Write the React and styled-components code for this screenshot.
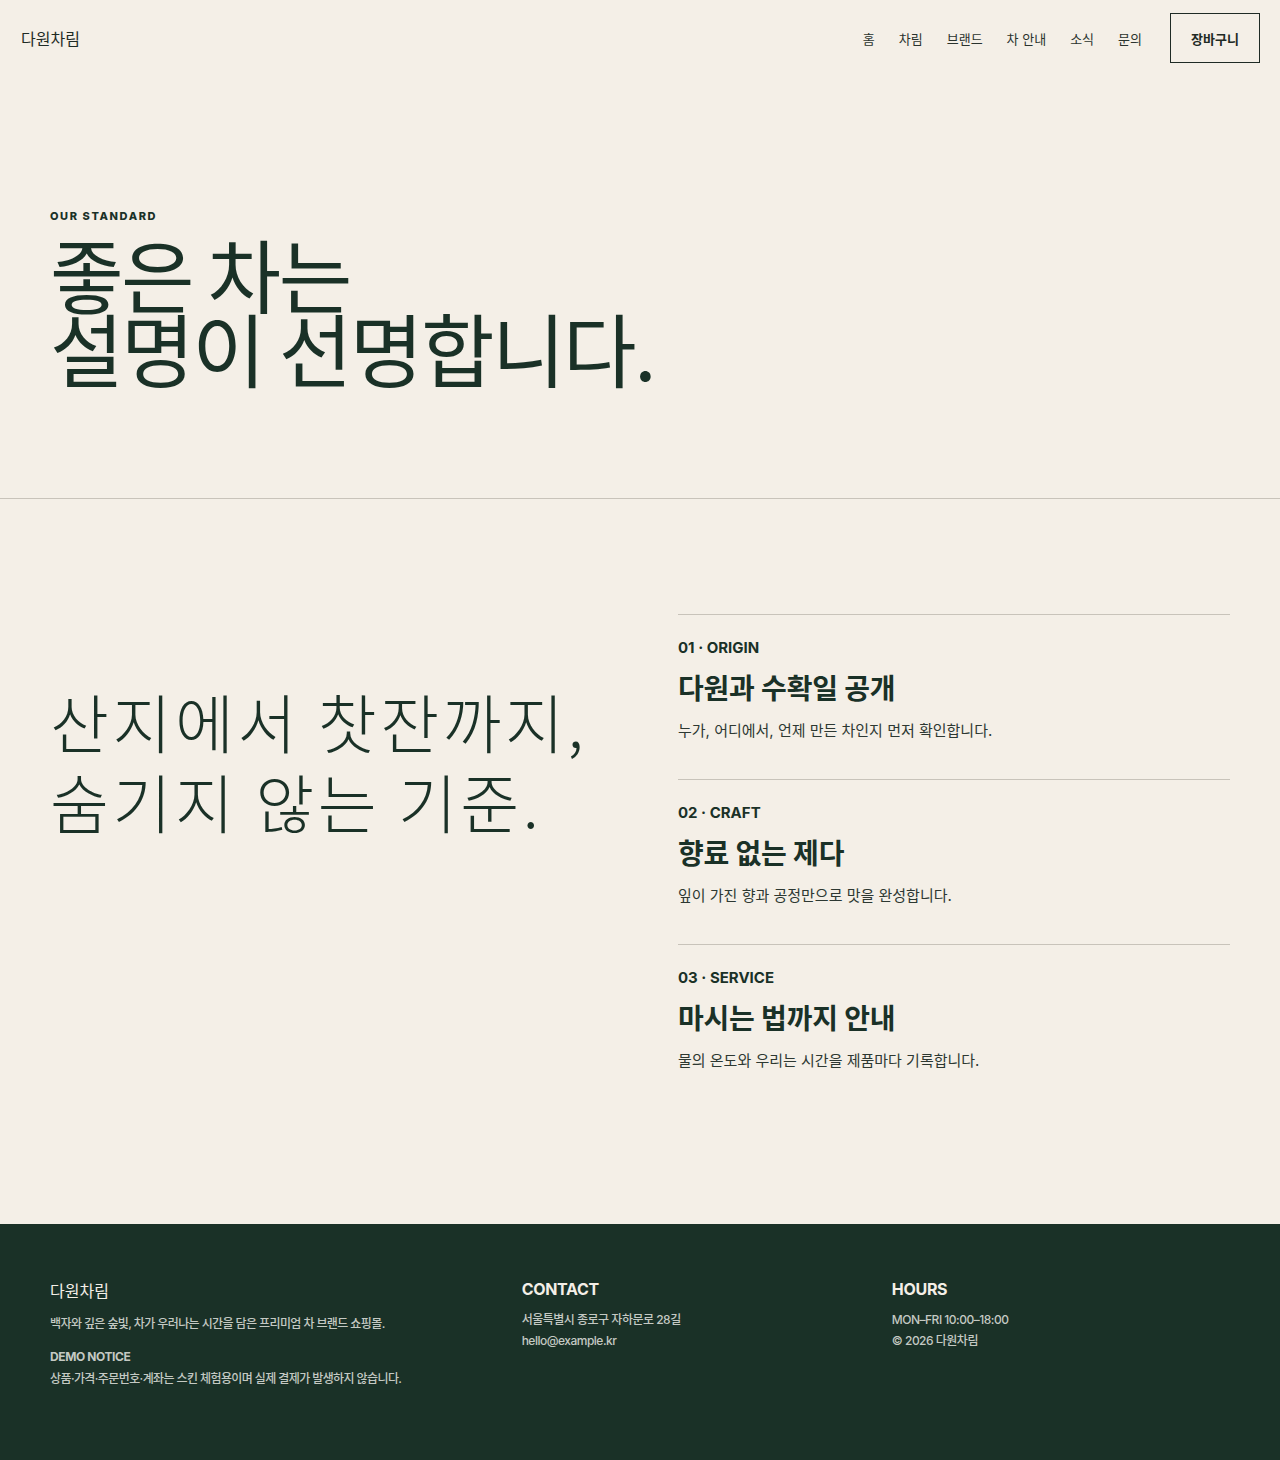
import React from 'react';
import styled, { createGlobalStyle } from 'styled-components';

const GlobalStyle = createGlobalStyle`
  * { box-sizing: border-box; }
  body {
    margin: 0;
    background: #f4efe7;
    color: #1a3127;
    font-family: Inter, "Noto Sans CJK KR", sans-serif;
  }
`;

const navItems = ['홈', '차림', '브랜드', '차 안내', '소식', '문의'];

const standards = [
  { label: '01 · ORIGIN', title: '다원과 수확일 공개', desc: '누가, 어디에서, 언제 만든 차인지 먼저 확인합니다.' },
  { label: '02 · CRAFT', title: '향료 없는 제다', desc: '잎이 가진 향과 공정만으로 맛을 완성합니다.' },
  { label: '03 · SERVICE', title: '마시는 법까지 안내', desc: '물의 온도와 우리는 시간을 제품마다 기록합니다.' },
];

const App = () => {
  return (
    <>
      <GlobalStyle />
      <StyledHeader>
        <StyledLogo>다원차림</StyledLogo>
        <StyledNav>
          {navItems.map((item) => (
            <StyledNavLink key={item} href="#">{item}</StyledNavLink>
          ))}
          <StyledCartButton>장바구니</StyledCartButton>
        </StyledNav>
      </StyledHeader>

      {/* Hero */}
      <StyledHero>
        <StyledEyebrow>OUR STANDARD</StyledEyebrow>
        <StyledHeroTitle>좋은 차는<br />설명이 선명합니다.</StyledHeroTitle>
      </StyledHero>

      {/* Standards */}
      <StyledStandards>
        <StyledStandardsTitle>산지에서 찻잔까지,<br />숨기지 않는 기준.</StyledStandardsTitle>
        <StyledList>
          {standards.map((item) => (
            <StyledItem key={item.label}>
              <StyledItemLabel>{item.label}</StyledItemLabel>
              <StyledItemTitle>{item.title}</StyledItemTitle>
              <StyledItemDesc>{item.desc}</StyledItemDesc>
            </StyledItem>
          ))}
        </StyledList>
      </StyledStandards>

      <StyledFooter>
        <StyledFooterCol>
          <StyledFooterLogo>다원차림</StyledFooterLogo>
          <StyledFooterText>백자와 깊은 숲빛, 차가 우러나는 시간을 담은 프리미엄 차 브랜드 쇼핑몰.</StyledFooterText>
          <StyledNoticeTitle>DEMO NOTICE</StyledNoticeTitle>
          <StyledFooterText $tight>상품·가격·주문번호·계좌는 스킨 체험용이며 실제 결제가 발생하지 않습니다.</StyledFooterText>
        </StyledFooterCol>
        <StyledFooterCol>
          <StyledFooterHeading>CONTACT</StyledFooterHeading>
          <StyledFooterLine>서울특별시 종로구 자하문로 28길</StyledFooterLine>
          <StyledFooterLine>hello@example.kr</StyledFooterLine>
        </StyledFooterCol>
        <StyledFooterCol>
          <StyledFooterHeading>HOURS</StyledFooterHeading>
          <StyledFooterLine>MON–FRI 10:00–18:00</StyledFooterLine>
          <StyledFooterLine>© 2026 다원차림</StyledFooterLine>
        </StyledFooterCol>
      </StyledFooter>
    </>
  );
};

const StyledHeader = styled.header`
  height: 76px;
  padding: 0 20px 0 21px;
  display: flex;
  align-items: center;
  justify-content: space-between;
`;
const StyledLogo = styled.div`
  font-size: 16px;
  color: #1f2b25;
`;
const StyledNav = styled.nav`
  display: flex;
  align-items: center;
  gap: 24px;
`;
const StyledNavLink = styled.a`
  font-size: 13px;
  color: #2a332e;
  text-decoration: none;
`;
const StyledCartButton = styled.button`
  margin-left: 4px;
  width: 90px;
  height: 50px;
  border: 1px solid #1f2b25;
  background: transparent;
  font-family: inherit;
  font-size: 13px;
  font-weight: 700;
  color: #1f2b25;
`;
const StyledHero = styled.section`
  padding: 133px 50px 114px;
  border-bottom: 1px solid #c8c3ba;
`;
const StyledEyebrow = styled.div`
  font-size: 11px;
  font-weight: 800;
  letter-spacing: 1.6px;
  color: #1a3127;
`;
const StyledHeroTitle = styled.h1`
  margin: 12px 0 0;
  font-family: "Noto Sans CJK KR", sans-serif;
  font-size: 80px;
  font-weight: 400;
  line-height: 0.93;
  letter-spacing: -2.5px;
  color: #1a3127;
`;
const StyledStandards = styled.section`
  padding: 115px 50px 115px;
  display: grid;
  grid-template-columns: 1fr 1fr;
  gap: 76px;
`;
const StyledStandardsTitle = styled.h2`
  margin: 66px 0 0;
  font-family: "Noto Sans CJK KR", sans-serif;
  font-size: 64px;
  font-weight: 300;
  line-height: 1.25;
  letter-spacing: 3.6px;
  color: #1a3127;
`;
const StyledList = styled.div`
  display: flex;
  flex-direction: column;
`;
const StyledItem = styled.div`
  border-top: 1px solid #c8c3ba;
  padding: 22px 0 37px;
`;
const StyledItemLabel = styled.div`
  font-size: 15px;
  font-weight: 700;
  line-height: 21px;
  color: #1a3127;
`;
const StyledItemTitle = styled.h3`
  margin: 14px 0 0;
  font-size: 28px;
  font-weight: 700;
  line-height: 35px;
  letter-spacing: -0.2px;
  color: #1a3127;
`;
const StyledItemDesc = styled.p`
  margin: 12px 0 0;
  font-size: 15px;
  line-height: 23px;
  color: #2d3832;
`;
const StyledFooter = styled.footer`
  background: #1a3127;
  padding: 54px 50px 72px;
  display: grid;
  grid-template-columns: 1.3fr 1fr 1fr;
  gap: 32px;
  height: 236px;
`;
const StyledFooterCol = styled.div`
  display: flex;
  flex-direction: column;
`;
const StyledFooterLogo = styled.div`
  font-size: 16px;
  line-height: 26px;
  color: #f4efe7;
`;
const StyledFooterHeading = styled.div`
  font-size: 16px;
  font-weight: 700;
  line-height: 22px;
  letter-spacing: -0.3px;
  color: #f4efe7;
  margin-bottom: 9px;
`;
const StyledFooterText = styled.p`
  margin: ${(props) => (props.$tight ? '4px' : '11px')} 0 0;
  font-size: 12px;
  font-weight: 500;
  line-height: 18px;
  letter-spacing: -0.6px;
  color: #c4c9c3;
`;
const StyledNoticeTitle = styled.div`
  margin-top: 15px;
  font-size: 12px;
  font-weight: 700;
  line-height: 18px;
  letter-spacing: -0.4px;
  color: #c4c9c3;
`;
const StyledFooterLine = styled.div`
  font-size: 12px;
  font-weight: 500;
  line-height: 21px;
  letter-spacing: -0.5px;
  color: #c4c9c3;
`;

export default App;
